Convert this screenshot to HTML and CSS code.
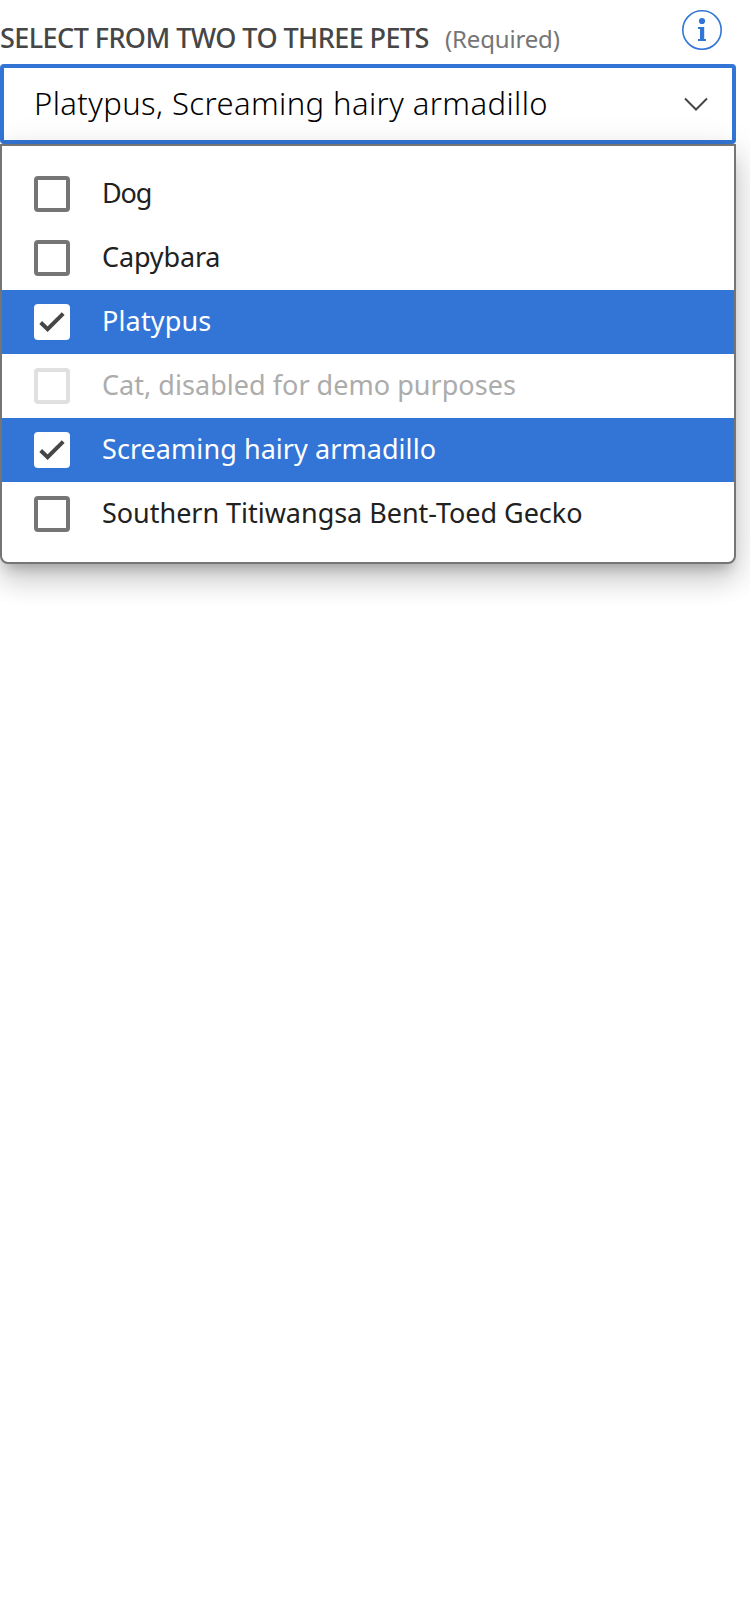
FILE: index.html
```
<!DOCTYPE html>
<html lang="en">
<head>
<meta charset="utf-8">
<title>Select pets</title>
<link rel="stylesheet" href="styles.css">
</head>
<body>
<main class="field">
  <header class="field-header">
    <label class="field-label">SELECT FROM TWO TO THREE PETS</label>
    <span class="required">(Required)</span>
    <svg class="info" viewBox="0 0 40 40" aria-label="Information">
      <circle cx="20" cy="20" r="19.2" fill="none" stroke="#3375d6" stroke-width="1.6"/>
      <circle cx="20" cy="11" r="3.1" fill="#3375d6"/>
      <path d="M16 17h6.2v12H24v2h-8v-2h2v-10h-2z" fill="#3375d6"/>
    </svg>
  </header>
  <div class="select">
    <span class="value">Platypus, Screaming hairy armadillo</span>
    <svg class="chevron" viewBox="0 0 24 14"><path d="M1 1.5l11 11L23 1.5" fill="none" stroke="#464646" stroke-width="2"/></svg>
  </div>
  <ul class="listbox">
    <li class="option"><span class="box"></span><span class="text dog">Dog</span></li>
    <li class="option"><span class="box"></span><span class="text capybara">Capybara</span></li>
    <li class="option selected"><span class="box"><svg class="check" viewBox="0 0 36 36"><path d="M6.7 18.5l6.9 6.6L29.2 9.6" fill="none" stroke="#464646" stroke-width="4"/></svg></span><span class="text platypus">Platypus</span></li>
    <li class="option disabled"><span class="box"></span><span class="text cat">Cat, disabled for demo purposes</span></li>
    <li class="option selected"><span class="box"><svg class="check" viewBox="0 0 36 36"><path d="M6.7 18.5l6.9 6.6L29.2 9.6" fill="none" stroke="#464646" stroke-width="4"/></svg></span><span class="text armadillo">Screaming hairy armadillo</span></li>
    <li class="option"><span class="box"></span><span class="text gecko">Southern Titiwangsa Bent-Toed Gecko</span></li>
  </ul>
</main>
</body>
</html>
```
FILE: styles.css
```
* { box-sizing: border-box; }
body {
  margin: 0;
  min-height: 1624px;
  background: #fff;
  font-family: "Noto Sans", "Open Sans", sans-serif;
}
.field { width: 736px; }
.field-header {
  display: flex;
  height: 64px;
  padding: 10px 14px 0 0;
  white-space: nowrap;
}
.field-label {
  width: 445px;
  padding-top: 8px;
  color: #464646;
  font-size: 27px;
  font-weight: 500;
  line-height: 40px;
  letter-spacing: -0.57px;
}
.required {
  padding-top: 9px;
  color: #757575;
  font-size: 24px;
  line-height: 40px;
  letter-spacing: -0.17px;
}
.info { width: 40px; height: 40px; margin-left: auto; }
.select {
  display: flex;
  align-items: center;
  justify-content: space-between;
  height: 80px;
  padding: 0 24px 0 30px;
  border: 4px solid #3375d6;
  border-radius: 4px;
  white-space: nowrap;
}
.value {
  padding-bottom: 2px;
  color: #000;
  font-size: 31px;
  font-weight: 300;
  line-height: 48px;
  letter-spacing: 0.41px;
}
.chevron { width: 24px; height: 14px; }
.listbox {
  position: relative;
  margin: 0;
  padding: 16px 0;
  list-style: none;
  background: #fff;
  border: 2px solid #757575;
  border-radius: 0 0 8px 8px;
  box-shadow: 0 10px 12px -6px rgba(0, 0, 0, 0.2),
    0 16px 28px 0 rgba(0, 0, 0, 0.14),
    0 8px 36px 2px rgba(0, 0, 0, 0.12);
}
.option {
  display: flex;
  align-items: center;
  gap: 32px;
  height: 64px;
  padding: 0 32px;
  color: #212121;
  white-space: nowrap;
}
.box {
  flex: none;
  width: 36px;
  height: 36px;
  background: #fff;
  border: 4px solid #757575;
  border-radius: 4px;
}
.text { padding-bottom: 2px; font-size: 27px; line-height: 40px; }
.dog { letter-spacing: -1.1px; }
.capybara { letter-spacing: -0.15px; }
.platypus { letter-spacing: 0.15px; }
.cat { letter-spacing: 0.03px; }
.armadillo { letter-spacing: 0.06px; }
.gecko { letter-spacing: -0.03px; }
.selected { background: #3375d6; color: #fff; }
.selected .box { border: 0; }
.check { display: block; width: 36px; height: 36px; }
.disabled { color: #acacac; }
.disabled .box { border-color: #e0e0e0; }
```
